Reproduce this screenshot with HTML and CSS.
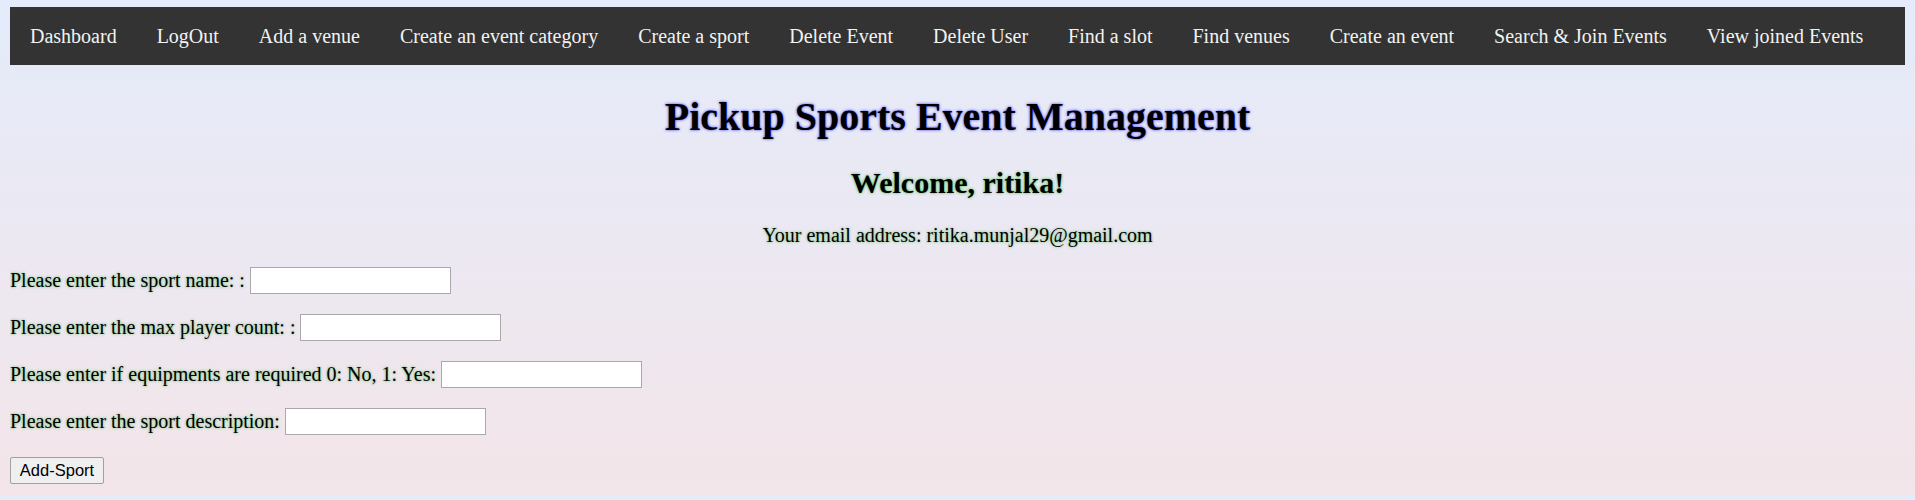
FILE: index.html
```html
<!DOCTYPE html>
<html lang="en">
<head>
<meta charset="utf-8">
<title>Pickup Sports Event Management</title>
<link rel="stylesheet" href="styles.css">
</head>
<body>
<nav class="topnav">
  <a href="#">Dashboard</a>
  <a href="#">LogOut</a>
  <a href="#">Add a venue</a>
  <a href="#">Create an event category</a>
  <a href="#">Create a sport</a>
  <a href="#">Delete Event</a>
  <a href="#">Delete User</a>
  <a href="#">Find a slot</a>
  <a href="#">Find venues</a>
  <a href="#">Create an event</a>
  <a href="#">Search &amp; Join Events</a>
  <a href="#">View joined Events</a>
</nav>
<h1 class="title">Pickup Sports Event Management</h1>
<h2 class="welcome">Welcome, ritika!</h2>
<p class="email">Your email address: ritika.munjal29@gmail.com</p>
<form class="sport-form">
  <div class="field"><label class="field-label">Please enter the sport name: :</label><input class="field-input" type="text"></div>
  <div class="field"><label class="field-label">Please enter the max player count: :</label><input class="field-input" type="text"></div>
  <div class="field"><label class="field-label">Please enter if equipments are required 0: No, 1: Yes:</label><input class="field-input" type="text"></div>
  <div class="field"><label class="field-label">Please enter the sport description:</label><input class="field-input" type="text"></div>
  <div class="actions"><button class="submit-btn" type="button">Add-Sport</button></div>
</form>
</body>
</html>
```
FILE: styles.css
```css
body {
  margin: 7px 10px 0;
  padding-bottom: 12px;
  font-family: "Liberation Serif", "Times New Roman", serif;
  font-size: 20px;
  background: linear-gradient(to bottom, #e4ebfa, #f3e5e9);
}

.topnav {
  display: flex;
  background: #333333;
}

.topnav a {
  color: #f2f2f2;
  text-decoration: none;
  font-size: 20px;
  line-height: 23px;
  padding: 17.5px 20px;
}

.title {
  margin: 29px 0 25px;
  font-size: 40px;
  line-height: 46px;
  text-align: center;
  color: #000;
  text-shadow: 0 0 3px #3333ff;
}

.welcome {
  margin: 0 0 24px;
  font-size: 30px;
  line-height: 35px;
  text-align: center;
  color: #000;
  text-shadow: 0 0 3px rgba(0, 170, 0, 0.8);
}

.email {
  margin: 0 0 20px;
  font-size: 20px;
  line-height: 23px;
  text-align: center;
  color: #000;
  text-shadow: 0 0 3px rgba(0, 160, 0, 0.6);
}

.sport-form {
  display: flex;
  flex-direction: column;
  gap: 20px;
}

.field {
  display: flex;
  align-items: center;
  gap: 5px;
  height: 27px;
}

.field-label {
  color: #000;
  text-shadow: 0 0 3px rgba(0, 160, 0, 0.6);
}

.field-input {
  box-sizing: border-box;
  width: 201px;
  height: 27px;
  margin: 0;
  border: 1px solid #a9a9a9;
  background: #fff;
}

.actions {
  padding-top: 2px;
}

.submit-btn {
  box-sizing: border-box;
  height: 27px;
  width: 94px;
  margin: 0;
  padding: 0 8px;
  font-family: "Liberation Sans", Arial, sans-serif;
  font-size: 16.5px;
  color: #000;
  background: #efefef;
  border: 1px solid #a0a0a0;
  border-radius: 2px;
}
```
